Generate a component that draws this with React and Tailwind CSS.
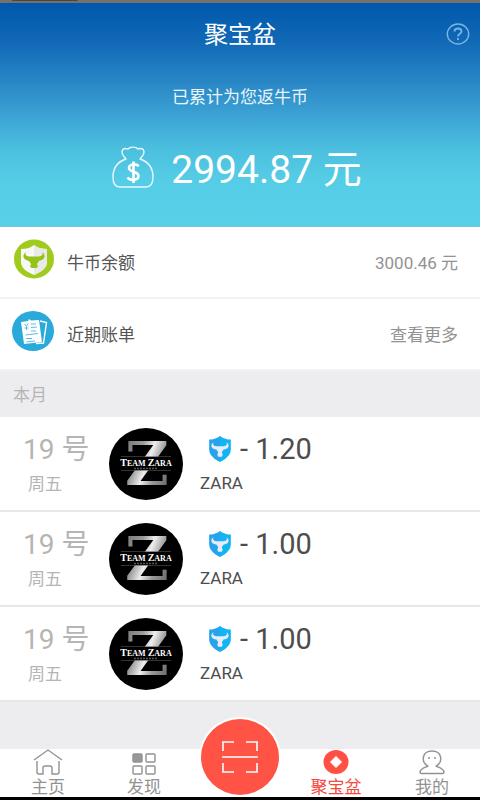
import React from 'react';

const transactions = [
  { id: 1, day: '19 号', weekday: '周五', amount: '- 1.20', merchant: 'ZARA' },
  { id: 2, day: '19 号', weekday: '周五', amount: '- 1.00', merchant: 'ZARA' },
  { id: 3, day: '19 号', weekday: '周五', amount: '- 1.00', merchant: 'ZARA' },
];

const SHIELD = 'M14 1C18 4 22 5 26 5V16C26 22 20 27 14 30C8 27 2 22 2 16V5C6 5 10 4 14 1Z';
const BULL =
  'M7 8C2 11 5 16 10 16L12 19L11 22L12 24H16L17 22L16 19L18 16C23 16 26 11 21 8C23 11 20 12.500 17 12.500H11C8 12.500 5 11 7 8Z';

function MoneyBagIcon() {
  return (
    <svg viewBox="0 0 42 42" className="size-[42px]" fill="none" aria-hidden="true">
      <path
        d="M14 13C12 10 9.500 9 10 5.500C10.500 2.500 13 2 16 3C18 0.500 24 0.500 26 3C29 2 31.500 2.500 32 5.500C32.500 9 30 10 28 13C37 16 41 23 41 31C41 38 39 41 34 41H8C3 41 1 38 1 31C1 23 5 16 14 13Z"
        stroke="#e8fafd"
        strokeWidth="1.4"
        strokeLinejoin="round"
      />
      <path
        d="M26.500 20.500C25 17.500 17 17.500 17 22C17 26.500 26.500 25 26.500 30C26.500 34.500 18 35 15.500 31.500M21.500 15.500V37"
        stroke="#fff"
        strokeWidth="2.6"
      />
    </svg>
  );
}

function BalanceIcon() {
  return (
    <svg viewBox="0 0 42 42" className="size-[42px] shrink-0" aria-hidden="true">
      <ellipse cx="22" cy="20" rx="20" ry="19.500" fill="#a0cb1c" />
      <path d="M22 6C26 9 30 10 35 10V23C35 29 29 33 22 36C15 33 9 29 9 23V10C14 10 18 9 22 6Z" fill="#f8f8f6" />
      <path d="M22 6C26 9 30 10 35 10V23C35 29 29 33 22 36Z" fill="#e9eae6" />
      <path
        d="M14 13C9 17 12 21 17 22L19 25L18 28L20 29H24L26 28L25 25L27 22C32 21 35 17 30 13C32 17 28 17.500 25 17.500H19C16 17.500 12 17 14 13Z"
        fill="#95c21a"
      />
    </svg>
  );
}

function BillIcon() {
  return (
    <svg viewBox="0 0 42 42" className="size-[42px] shrink-0" fill="none" aria-hidden="true">
      <ellipse cx="21" cy="20" rx="21" ry="20" fill="#29aadb" />
      <path d="M28 10L34.500 11.500L31.500 32L24 32.500" stroke="#fff" strokeWidth="1.4" />
      <path d="M9 11L16 10L17 8L19 9.500L27 9L30 31L12 33Z" fill="#fff" />
      <path
        d="M12.500 13L14.500 15.500L16 12.500M14.500 15.500V19M12.500 17H16.500M18.500 13H24M19 16.500L25 16M19 20H24M13.500 24L26 22.500M14 27.500H20M14.500 31L23 30"
        stroke="#5bbde2"
        strokeWidth="1"
      />
    </svg>
  );
}

function CoinShieldIcon() {
  return (
    <svg viewBox="0 0 28 31" className="h-7 w-7" aria-hidden="true">
      <defs>
        <linearGradient id="coin-shield" x1="0" x2="1" y1="0" y2="0">
          <stop offset="0.5" stopColor="#25a4ec" />
          <stop offset="0.5" stopColor="#13b4f2" />
        </linearGradient>
      </defs>
      <path d={SHIELD} fill="url(#coin-shield)" />
      <path d={BULL} fill="#e6ecfb" />
    </svg>
  );
}

function TeamLogo() {
  return (
    <svg viewBox="0 0 74 72" className="h-[72px] w-[74px] shrink-0" role="img" aria-label="Team Zara">
      <defs>
        <linearGradient id="metal" x1="0" x2="1" y1="0.2" y2="0.8">
          <stop offset="0" stopColor="#777" />
          <stop offset="0.3" stopColor="#999" />
          <stop offset="0.5" stopColor="#eee" />
          <stop offset="0.7" stopColor="#999" />
          <stop offset="1" stopColor="#666" />
        </linearGradient>
      </defs>
      <ellipse cx="37" cy="36" rx="37" ry="36" fill="#000" />
      <text
        x="38"
        y="57"
        textAnchor="middle"
        fill="url(#metal)"
        className="font-['DejaVu_Serif',serif] text-[60px] leading-none font-bold"
      >
        Z
      </text>
      <path d="M12 29H62V42H12Z" fill="#000" />
      <path d="M12 28.500H62M12 42.500H62" stroke="#555" strokeWidth="0.6" />
      <text x="37" y="38" textAnchor="middle" fill="#fff" className="font-['Liberation_Serif',serif] font-bold">
        <tspan className="text-[10px]">T</tspan>
        <tspan className="text-[8px]">EAM </tspan>
        <tspan className="text-[10px]">Z</tspan>
        <tspan className="text-[8px]">ARA</tspan>
      </text>
      <path d="M25 40.500H49" stroke="#555" strokeWidth="1.500" strokeDasharray="2 1" />
    </svg>
  );
}

function HomeIcon() {
  return (
    <svg viewBox="0 0 30 28" className="h-7 w-[30px]" fill="none" stroke="#929294" strokeWidth="1.4" aria-hidden="true">
      <path d="M1 11L15 1L29 11M4 12V23Q4 25 6 25H10V19Q10 17 12 17H17Q19 17 19 19V25H24Q26 25 26 23V12" />
    </svg>
  );
}

function DiscoverIcon() {
  return (
    <svg viewBox="0 0 24 28" className="h-7 w-6" fill="none" stroke="#929294" strokeWidth="1.4" aria-hidden="true">
      <rect x="1" y="5" width="9" height="8" rx="1" fill="#98989b" />
      <rect x="14" y="5" width="9" height="8" rx="1" />
      <rect x="1" y="17" width="9" height="8" rx="1" />
      <rect x="14" y="17" width="9" height="8" rx="1" />
    </svg>
  );
}

function CoinIcon() {
  return (
    <svg viewBox="0 0 26 28" className="h-7 w-[26px]" aria-hidden="true">
      <ellipse cx="13" cy="13" rx="12.500" ry="12" fill="#ff5043" />
      <path d="M13 7.500L18.500 13L13 18.500L7.500 13Z" fill="#fff" stroke="#fff" strokeLinejoin="round" />
    </svg>
  );
}

function ProfileIcon() {
  return (
    <svg viewBox="0 0 26 28" className="h-7 w-[26px]" fill="none" stroke="#929294" strokeWidth="1.4" aria-hidden="true">
      <path
        d="M9 17C1.500 13 3 2 13 2C23 2 24.500 13 17 17C21 19 25 20 25 23Q25 24.500 23.500 24.500H2.500Q1 24.500 1 23C1 20 5 19 9 17Z"
        strokeLinejoin="round"
      />
      <path d="M9 9H11M15 9H17" />
    </svg>
  );
}

function ScanIcon() {
  return (
    <svg viewBox="0 0 36 32" className="h-8 w-9" fill="none" stroke="#fff" strokeWidth="1.6" aria-hidden="true">
      <path d="M1 10V1H12M24 1H35V10M35 22V31H24M12 31H1V22M0 16H36" />
    </svg>
  );
}

function SummaryRow({ icon, label, value }) {
  return (
    <a href="#" className="flex h-[72px] items-start justify-between border-b-2 border-[#f2f2f3] bg-white pr-[22px] pl-3">
      <span className="flex items-center gap-[13px] pt-3">
        {icon}
        <span className="pt-[6px] text-[#555]">{label}</span>
      </span>
      <span className="pt-6 text-[#929292]">{value}</span>
    </a>
  );
}

function Transaction({ item }) {
  return (
    <li className="flex h-[95px] items-center border-b-2 border-[#e7e7e9] bg-white">
      <div className="w-[109px] shrink-0 pt-1 pl-[23px] text-[#b5b5b5]">
        <p className="text-[28px] leading-9">{item.day}</p>
        <p className="pl-[5px] leading-8">{item.weekday}</p>
      </div>
      <TeamLogo />
      <div className="pt-[2px] pl-[17px] text-[#4d4d4d]">
        <p className="flex items-center gap-[6px] pl-[6px] text-[29px] leading-9">
          <CoinShieldIcon />
          {item.amount}
        </p>
        <p className="leading-8">{item.merchant}</p>
      </div>
    </li>
  );
}

function NavItem({ icon, label, active }) {
  return (
    <a
      href="#"
      aria-current={active ? 'page' : undefined}
      className={`flex flex-col items-center leading-5 ${active ? 'text-[#f5493d]' : 'text-[#929294]'}`}
    >
      {icon}
      {label}
    </a>
  );
}

export default function App() {
  return (
    <div className="flex min-h-screen flex-col bg-[#ededef] font-[Roboto,'Noto_Sans_CJK_SC',sans-serif] text-[17px] leading-6">
      <div className="h-[3px] bg-[#77706d] pl-3">
        <div className="h-px w-[66px] rounded-b bg-[#4b4644]" />
      </div>

      <header className="flex h-[224px] flex-col border-b border-[#79c5d8] bg-[linear-gradient(to_bottom,#0058ab_0%,#1168b6_17%,#2784c4_34%,#3ea5d6_52%,#4cc0df_66%,#56cde6_80%,#58d0e8_100%)] text-white">
        <div className="grid grid-cols-[1fr_auto_1fr] items-center px-[10px] pt-[14px]">
          <h1 className="col-start-2 text-2xl leading-9">聚宝盆</h1>
          <button type="button" aria-label="帮助" className="justify-self-end">
            <svg viewBox="0 0 24 24" className="size-6" fill="none" stroke="#79b5e3" aria-hidden="true">
              <ellipse cx="12" cy="11" rx="10.700" ry="10" strokeWidth="1.4" />
              <path d="M8.500 8.500C8.500 4.500 15.500 4.500 15.500 8.500C15.500 11 12 10.500 12 13.500M12 15V17" strokeWidth="1.8" />
            </svg>
          </button>
        </div>
        <p className="pt-8 text-center text-[#e9f5fb]">已累计为您返牛币</p>
        <div className="flex items-start justify-center gap-[17px] pt-[37px] pr-[6px]">
          <MoneyBagIcon />
          <span className="text-[39px] leading-[48px]">2994.87 元</span>
        </div>
      </header>

      <main className="flex flex-1 flex-col">
        <SummaryRow icon={<BalanceIcon />} label="牛币余额" value="3000.46 元" />
        <SummaryRow icon={<BillIcon />} label="近期账单" value="查看更多" />
        <h2 className="h-[46px] pt-3 pl-[13px] text-[#b5b5b5]">本月</h2>
        <ul>
          {transactions.map((item) => (
            <Transaction key={item.id} item={item} />
          ))}
        </ul>
      </main>

      <nav className="relative grid h-[51px] grid-cols-5 border-b-3 border-black bg-white">
        <NavItem icon={<HomeIcon />} label="主页" />
        <NavItem icon={<DiscoverIcon />} label="发现" />
        <button
          type="button"
          aria-label="扫一扫"
          className="absolute bottom-0 left-1/2 flex h-20 w-[82px] -translate-x-1/2 items-center justify-center rounded-[50%] border-2 border-white bg-[#ff5445]"
        >
          <ScanIcon />
        </button>
        <div />
        <NavItem icon={<CoinIcon />} label="聚宝盆" active />
        <NavItem icon={<ProfileIcon />} label="我的" />
      </nav>
    </div>
  );
}
